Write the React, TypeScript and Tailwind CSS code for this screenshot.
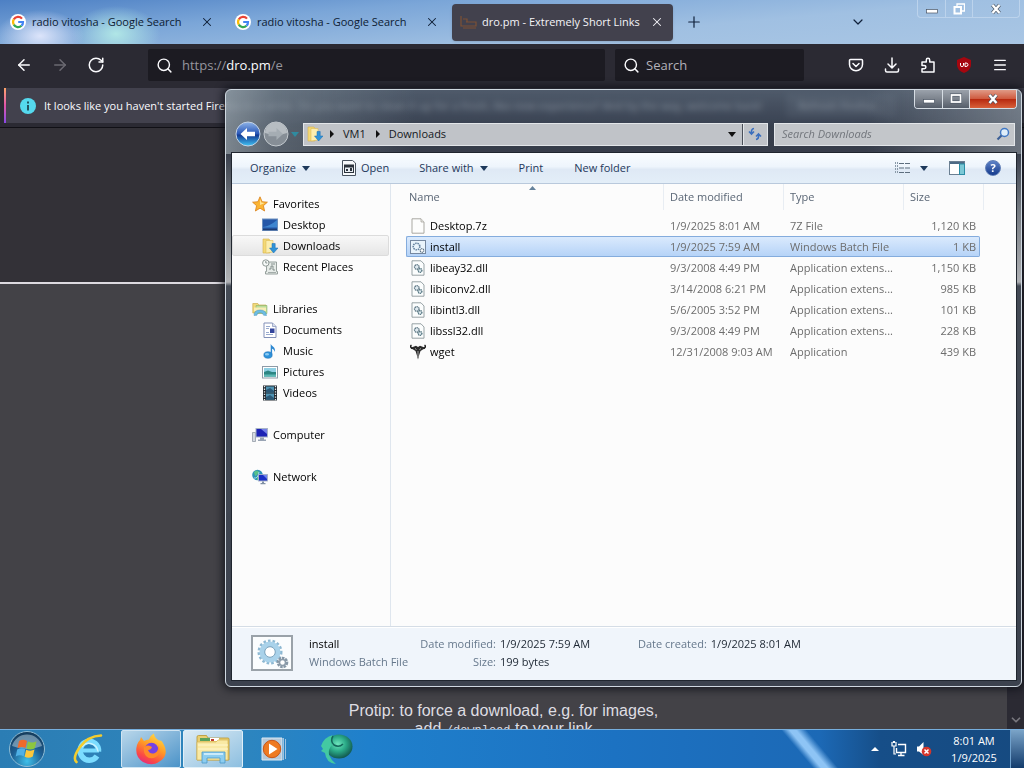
import type { ReactNode } from "react";
import { ArrowLeft, ArrowRight, ChevronDown, Menu, Plus, RotateCw, Search, X } from "lucide-react";

type IconProps = { className?: string };

function GoogleIcon() {
  return (
    <svg viewBox="0 0 16 16" className="size-4 shrink-0">
      <circle cx="8" cy="8" r="8" fill="#fff" />
      <g fill="none" strokeWidth="2.2">
        <path d="M12 4.6A5 5 0 0 0 3.8 5.4" stroke="#ea4335" />
        <path d="M3.8 5.4a5 5 0 0 0 0 5.2" stroke="#fbbc05" />
        <path d="M3.8 10.6a5 5 0 0 0 7.7 1.2" stroke="#34a853" />
        <path d="M11.5 11.8A5 5 0 0 0 13 8H8.2" stroke="#4285f4" />
      </g>
    </svg>
  );
}

function PocketIcon() {
  return (
    <svg viewBox="0 0 16 16" className="size-4" fill="none" stroke="currentColor" strokeWidth="1.5" strokeLinecap="round" strokeLinejoin="round">
      <path d="M2.5 2.5h11a1 1 0 0 1 1 1v4a6.500 6.200 0 0 1-13 0v-4a1 1 0 0 1 1-1z" />
      <path d="M5 6.500l3 3 3-3" />
    </svg>
  );
}

function DownloadIcon() {
  return (
    <svg viewBox="0 0 16 16" className="size-4" fill="none" stroke="currentColor" strokeWidth="1.5" strokeLinecap="round" strokeLinejoin="round">
      <path d="M8 1v9.500M4 7l4 4 4-4M1.500 12v1.500a1.500 1.500 0 0 0 1.500 1.500h10a1.500 1.500 0 0 0 1.500-1.500V12" />
    </svg>
  );
}

function ExtensionIcon() {
  return (
    <svg viewBox="0 0 16 16" className="size-4" fill="none" stroke="currentColor" strokeWidth="1.5" strokeLinejoin="round">
      <path d="M2 15V11.800h2.200a1.700 1.700 0 0 0 0-3.400H2V5h4.300V3a1.700 1.700 0 0 1 3.400 0v2H14v10z" />
    </svg>
  );
}

function DownloadsFolderIcon({ className = "size-4" }: IconProps) {
  return (
    <svg viewBox="0 0 16 16" className={className}>
      <path d="M1 1h6l1 1.500V15H1z" fill="#f3d978" stroke="#d9b448" strokeWidth=".6" />
      <path d="M4 2.500h7V14l-7 1z" fill="#fbeeb0" stroke="#d9b448" strokeWidth=".5" />
      <path d="M10 5.500h3.200V10H16l-4.400 5L7.500 10H10z" fill="#2f93d8" stroke="#1b6db0" strokeWidth=".5" />
    </svg>
  );
}

function StarIcon() {
  return (
    <svg viewBox="0 0 16 16" className="size-4">
      <path d="M8 .8l2.100 4.900 5.300.5-4 3.500 1.200 5.300L8 12.200 3.400 15l1.200-5.300-4-3.500 5.300-.5z" fill="#fbb534" stroke="#d97f16" strokeWidth=".8" />
      <path d="M8 3l1.300 3.500 3.500.4L8 9z" fill="#ffe49a" />
    </svg>
  );
}

function DesktopIcon() {
  return (
    <svg viewBox="0 0 16 16" className="size-4">
      <rect x=".5" y="2" width="15" height="11.500" fill="#2457a8" stroke="#6c8fbe" />
      <path d="M1 10Q8 9 15 3v7.500H1z" fill="#3f86d0" />
      <path d="M1 12.500h14" stroke="#1c3c73" strokeWidth="1.500" />
    </svg>
  );
}

function RecentIcon() {
  return (
    <svg viewBox="0 0 16 16" className="size-4">
      <path d="M4.500 3h10v9.500h1v2.500h-12v-2.500h1z" fill="#e6ebe8" stroke="#8d9794" strokeWidth=".9" />
      <circle cx="3.800" cy="4" r="3.200" fill="#f7faf9" stroke="#8d9794" />
      <path d="M3.800 2v2h1.500M7 10h2V7h2v4h2M9 5h4" fill="none" stroke="#7b8784" strokeWidth=".9" />
      <path d="M6 13.500h8" stroke="#a3acaa" />
    </svg>
  );
}

function LibrariesIcon() {
  return (
    <svg viewBox="0 0 16 16" className="size-4">
      <path d="M.8 2.500h5l1 1.500H14v8H.8z" fill="#f0d97b" stroke="#c8a53d" strokeWidth=".6" />
      <path d="M4 4.500h11v8H4z" fill="#b9dd9b" stroke="#80a860" strokeWidth=".5" />
      <path d="M2 6.500h12V10H2z" fill="#f9edb5" />
      <path d="M2 14.500Q2 9 8 9t6.500 5.500l-3-.3Q11 11.500 8 11.500T5 14.200z" fill="#6cbde3" stroke="#4a93bd" strokeWidth=".5" />
    </svg>
  );
}

function DocumentsIcon() {
  return (
    <svg viewBox="0 0 16 16" className="size-4">
      <path d="M2 1h8.500L14 4.500V15.500H2z" fill="#fff" stroke="#8290b8" />
      <path d="M10.500 1v3.500H14" fill="#d5dcec" stroke="#8290b8" strokeWidth=".7" />
      <path d="M4 4.500h4M4 6.500h3M4 10.500h3M4 12.500h7" stroke="#8ca0c8" strokeWidth=".9" />
      <path d="M8 6.500h4.500v4.500H8z" fill="#32459c" />
    </svg>
  );
}

function MusicIcon() {
  return (
    <svg viewBox="0 0 16 16" className="size-4">
      <ellipse cx="6" cy="12" rx="4.200" ry="3.300" fill="#2f93da" stroke="#1667ad" strokeWidth=".5" />
      <ellipse cx="5" cy="11.300" rx="2" ry="1.200" fill="#8ccbf3" />
      <path d="M8.700 12V.8C9.500 3.500 14 4 12.800 9 12.500 7 11 6 10.100 5.700V12z" fill="#2b87d1" />
    </svg>
  );
}

function PicturesIcon() {
  return (
    <svg viewBox="0 0 16 16" className="size-4">
      <rect x=".5" y="2.500" width="15" height="11.500" fill="#fff" stroke="#8d9aa7" />
      <rect x="2" y="4" width="12" height="8.500" fill="#8fd0e4" />
      <path d="M2 8l4-1.500 4 1.500 4 0v4.500H2z" fill="#2c8583" />
      <path d="M2 10.500h12v2H2z" fill="#5bb8b4" />
    </svg>
  );
}

function VideosIcon() {
  return (
    <svg viewBox="0 0 16 16" className="size-4">
      <rect x="1" y=".5" width="14" height="15" fill="#23292f" />
      <path d="M4 1.500h8v6H4zM4 8.500h8v6H4z" fill="#4f93b3" />
      <path d="M4 5l4-2 4 3v1.500H4zM4 12l4-2 4 3v1.500H4z" fill="#2a5876" />
      <path d="M2.500 1v15M13.500 1v15" stroke="#e4eaee" strokeWidth="1.300" strokeDasharray="1.300 1.300" />
    </svg>
  );
}

function ComputerIcon() {
  return (
    <svg viewBox="0 0 16 16" className="size-4">
      <path d="M.5 5.500h3v9h-3z" fill="#d6dbe2" stroke="#888f9b" strokeWidth=".7" />
      <rect x="4" y="1.500" width="11.500" height="8.500" fill="#1d23b4" stroke="#a8b4c8" />
      <path d="M9 2h6v5z" fill="#7580e8" />
      <path d="M8 10.500h4v2h2v1.500H6v-1.500h2z" fill="#99a4b4" />
    </svg>
  );
}

function NetworkIcon() {
  return (
    <svg viewBox="0 0 16 16" className="size-4">
      <circle cx="5.500" cy="6" r="5.300" fill="#2e93b8" />
      <path d="M2 3q3-3 5 0L5 6 3 7zM5 8l3 0-1 3-2 0z" fill="#58c18a" />
      <path d="M2 9q4 1 5-6" stroke="#bfe9f3" strokeWidth=".8" fill="none" />
      <rect x="6.500" y="5.500" width="9" height="6.500" fill="#1a2fc4" stroke="#a8b4c8" strokeWidth=".9" />
      <path d="M11 6h4v4z" fill="#6f84ef" />
      <path d="M10 12.500h2v1.500h1.500v1.200h-5V14H10z" fill="#8090a4" />
    </svg>
  );
}

function BlankFileIcon() {
  return (
    <svg viewBox="0 0 16 16" className="size-4">
      <path d="M2 .8h9L14 4v11.200H2z" fill="#fdfdfc" stroke="#a09f98" strokeWidth=".9" />
      <path d="M11 .8V4h3" fill="#e9e8e2" stroke="#a09f98" strokeWidth=".7" />
    </svg>
  );
}

function DllIcon() {
  return (
    <svg viewBox="0 0 16 16" className="size-4">
      <path d="M2 .8h9L14 4v11.200H2z" fill="#fbfdfd" stroke="#8c989c" strokeWidth=".9" />
      <circle cx="6.800" cy="7" r="2.300" fill="#dfeaf0" stroke="#58727f" strokeWidth="1.300" strokeDasharray="1.400 .5" />
      <circle cx="10" cy="10.500" r="1.900" fill="#dfeaf0" stroke="#3f6470" strokeWidth="1.200" strokeDasharray="1.200 .5" />
    </svg>
  );
}

function BatchIcon() {
  return (
    <svg viewBox="0 0 16 16" className="size-4">
      <rect x=".5" y="1.500" width="15" height="13" fill="#eaf4fb" stroke="#7688a0" />
      <circle cx="6.500" cy="7.500" r="3.300" fill="none" stroke="#66829f" strokeWidth="1.600" strokeDasharray="1.500 .8" />
      <circle cx="12" cy="11.500" r="1.800" fill="#fff" stroke="#5c7285" strokeWidth="1.200" strokeDasharray="1.200 .5" />
    </svg>
  );
}

function BatchThumbnail() {
  return (
    <svg viewBox="0 0 42 36" className="h-9 w-[42px]">
      <rect x="1" y="1" width="40" height="34" fill="#fbfdfe" stroke="#9aa2a9" strokeWidth="2" />
      <circle cx="19" cy="17" r="11" fill="none" stroke="#8db8d2" strokeWidth="3" strokeDasharray="2.500 2" />
      <circle cx="19" cy="17" r="8" fill="none" stroke="#a9d2ea" strokeWidth="5" />
      <circle cx="19" cy="17" r="5.300" fill="#fff" stroke="#6f9dbb" />
      <circle cx="31.500" cy="27.500" r="4.300" fill="#fff" stroke="#8697a6" strokeWidth="3" strokeDasharray="2.400 .8" />
      <circle cx="31.500" cy="27.500" r="3" fill="#fff" stroke="#8b9ba9" strokeWidth="1.500" />
    </svg>
  );
}

function WgetIcon() {
  return (
    <svg viewBox="0 0 16 16" className="size-4">
      <path d="M3.500 4.500C.5 4.500 0 2 1.500 1M12.500 4.500c3 0 3.500-2.500 2-3.500" fill="none" stroke="#1c1c1c" strokeWidth="1.500" />
      <path d="M1.500 3.500L6 1.800 8 3l2-1.200 4.500 1.700-2 2.200-2 1.300-1.300 4L8 15.500 6.800 11 5.500 7 3.500 5.700z" fill="#2b2b2b" />
      <path d="M5 4.500l1.500 1M11 4.500l-1.500 1M8 7v6" stroke="#c9c9c9" strokeWidth=".8" />
    </svg>
  );
}

function StartOrb() {
  return (
    <svg viewBox="0 0 38 38" className="size-[38px]">
      <defs>
        <radialGradient id="orb" cx=".5" cy=".85" r=".9">
          <stop offset="0" stopColor="#3fc0ea" />
          <stop offset=".5" stopColor="#1d5e93" />
          <stop offset="1" stopColor="#14344f" />
        </radialGradient>
      </defs>
      <circle cx="19" cy="19" r="17.500" fill="url(#orb)" stroke="#8fbdd6" />
      <path d="M4 16a15.500 15.500 0 0 1 30 0q-15 6-30 0z" fill="#d0e4ee" opacity=".45" />
      <path d="M11 11q4-2.500 8 0l-1.500 7q-4-2-8 .2z" fill="#ef6a2b" />
      <path d="M20 11.500q4.500 2 8.500-.3l-1.700 7q-4 2.300-8.300.3z" fill="#8dc63f" />
      <path d="M9.200 19.500q4-2.200 8-.2l-1.500 7q-4-2-8 .2z" fill="#4fb0e6" />
      <path d="M18.200 19.800q4.300 2 8.300-.2l-1.700 7q-4 2.300-8.200.2z" fill="#fcc73c" />
    </svg>
  );
}

function InternetExplorerIcon() {
  return (
    <svg viewBox="0 0 32 32" className="size-8">
      <path d="M8 17.500h18" stroke="#7bdcff" strokeWidth="4" />
      <path d="M25.500 18.500A9.200 9.500 0 1 0 24 23" fill="none" stroke="#7bdcff" strokeWidth="5.500" />
      <path d="M25 18.500A9 9.500 0 0 0 9 14" fill="none" stroke="#c9f3ff" strokeWidth="1.500" />
      <path d="M3.500 29Q-1 25 7 14T28 2.500" fill="none" stroke="#f4cd2e" strokeWidth="2.600" strokeLinecap="round" />
    </svg>
  );
}

function FirefoxIcon() {
  return (
    <svg viewBox="0 0 32 32" className="size-8">
      <defs>
        <linearGradient id="fox" x1=".8" y1="0" x2=".3" y2="1">
          <stop offset="0" stopColor="#ffe14a" />
          <stop offset=".45" stopColor="#ff9a26" />
          <stop offset=".8" stopColor="#fb4a45" />
          <stop offset="1" stopColor="#e52b7c" />
        </linearGradient>
      </defs>
      <path d="M5 7l1-3 3 4q2-1.500 5-1.500 1-4 5-6 0 4 5 7 2-.5 3 1 8 12-1 19-8 6.500-18 1.500-9-6-6-17 .8-3 3-5z" fill="url(#fox)" />
      <circle cx="16.500" cy="16.500" r="6.800" fill="#7542e5" />
      <path d="M9 14q4-3 8 0-1 3-4 3 2 5 7 3 4-2 3-8 4 8-2 12-6 3-10-1-3-4-2-9z" fill="#ff8a2a" />
    </svg>
  );
}

function ExplorerIcon() {
  return (
    <svg viewBox="0 0 34 32" className="h-8 w-[34px]">
      <path d="M1 4q0-1.500 1.500-1.500h8L12 5h20q1 0 1 1v21H1z" fill="#e9cf72" stroke="#b89530" strokeWidth=".8" />
      <path d="M4 5h10v3H4z" fill="#5aa25c" />
      <path d="M14 5h9v3h-9z" fill="#fff" />
      <path d="M15 6h3v2h-3z" fill="#c03c2c" />
      <path d="M1 9h19l2-2h10v20H1z" fill="#f9e9a4" stroke="#d5b654" strokeWidth=".7" />
      <path d="M2 12h30M2 16h30" stroke="#fff7cf" />
      <path d="M6 30V19h23v11h-5v-5H11v5z" fill="#8ccdf0" stroke="#4a97c8" strokeWidth=".8" />
      <path d="M8 21h19" stroke="#dff4ff" strokeWidth="1.500" />
    </svg>
  );
}

function MediaPlayerIcon() {
  return (
    <svg viewBox="0 0 26 24" className="h-6 w-[26px]">
      <path d="M1 1h20v22H1z" fill="#b6c9da" stroke="#dce9f3" />
      <path d="M22.500 1v22M24.500 2v20" stroke="#9fc3e0" />
      <circle cx="11" cy="12" r="8.700" fill="#ee7a22" stroke="#c9571a" />
      <path d="M8 6.500l8.500 5.500L8 17.500z" fill="#fff" />
    </svg>
  );
}

function GreenBirdIcon() {
  return (
    <svg viewBox="0 0 32 32" className="size-8">
      <defs>
        <radialGradient id="bird" cx=".45" cy=".4" r=".6">
          <stop offset="0" stopColor="#6fe6bd" />
          <stop offset=".5" stopColor="#2bab88" />
          <stop offset="1" stopColor="#12594f" />
        </radialGradient>
      </defs>
      <ellipse cx="18" cy="13.500" rx="13.500" ry="12" fill="url(#bird)" />
      <path d="M0 13Q3 4 12 2q-4 5-1 10-4 4-3 10 2 5 7 9Q5 30 4 20l-4-2 2-2z" fill="#43c9a2" />
      <path d="M12 3q-3 5 1 9 5 3 9-1" fill="none" stroke="#14665a" strokeWidth="1.500" />
    </svg>
  );
}

type FileEntry = { name: string; modified: string; type: string; size: string; icon: ReactNode; selected?: boolean };

const files: FileEntry[] = [
  { name: "Desktop.7z", modified: "1/9/2025 8:01 AM", type: "7Z File", size: "1,120 KB", icon: <BlankFileIcon /> },
  { name: "install", modified: "1/9/2025 7:59 AM", type: "Windows Batch File", size: "1 KB", icon: <BatchIcon />, selected: true },
  { name: "libeay32.dll", modified: "9/3/2008 4:49 PM", type: "Application extens...", size: "1,150 KB", icon: <DllIcon /> },
  { name: "libiconv2.dll", modified: "3/14/2008 6:21 PM", type: "Application extens...", size: "985 KB", icon: <DllIcon /> },
  { name: "libintl3.dll", modified: "5/6/2005 3:52 PM", type: "Application extens...", size: "101 KB", icon: <DllIcon /> },
  { name: "libssl32.dll", modified: "9/3/2008 4:49 PM", type: "Application extens...", size: "228 KB", icon: <DllIcon /> },
  { name: "wget", modified: "12/31/2008 9:03 AM", type: "Application", size: "439 KB", icon: <WgetIcon /> },
];

const places = [
  {
    name: "Favorites",
    icon: <StarIcon />,
    items: [
      { name: "Desktop", icon: <DesktopIcon /> },
      { name: "Downloads", icon: <DownloadsFolderIcon />, current: true },
      { name: "Recent Places", icon: <RecentIcon /> },
    ],
  },
  {
    name: "Libraries",
    icon: <LibrariesIcon />,
    items: [
      { name: "Documents", icon: <DocumentsIcon /> },
      { name: "Music", icon: <MusicIcon /> },
      { name: "Pictures", icon: <PicturesIcon /> },
      { name: "Videos", icon: <VideosIcon /> },
    ],
  },
  { name: "Computer", icon: <ComputerIcon />, items: [] },
  { name: "Network", icon: <NetworkIcon />, items: [] },
];

function MinimizeGlyph() {
  return (
    <svg viewBox="0 0 12 12" className="size-3">
      <rect x=".5" y="6.500" width="11" height="3.500" fill="#fff" stroke="#4a5563" strokeWidth=".7" />
    </svg>
  );
}

function CloseGlyph() {
  return (
    <svg viewBox="0 0 12 12" className="size-3">
      <path d="M2.500 2l7 8M9.500 2l-7 8" stroke="#4a5563" strokeWidth="3.600" />
      <path d="M2.500 2l7 8M9.500 2l-7 8" stroke="#fff" strokeWidth="2.400" />
    </svg>
  );
}

function BrowserTab({ title }: { title: string }) {
  return (
    <div className="flex w-[225px] items-center pl-[10px] text-[#0d1c33]">
      <GoogleIcon />
      <button className="ml-[6px] w-[168px] text-left whitespace-nowrap">{title}</button>
      <button aria-label="Close tab">
        <X className="size-[14px]" strokeWidth={1.800} />
      </button>
    </div>
  );
}

function Browser() {
  return (
    <div className="flex min-h-0 flex-1 flex-col">
      <div className="flex h-11 shrink-0 items-center bg-[radial-gradient(ellipse_44px_26px_at_40px_36px,#dce4fa,transparent),radial-gradient(ellipse_44px_28px_at_116px_34px,#b0e6e6,transparent),linear-gradient(175deg,#4d80c4_0%,#7ba6d8_30%,#a0c0e2_65%,#a9c6e4_100%)]">
        <BrowserTab title="radio vitosha - Google Search" />
        <BrowserTab title="radio vitosha - Google Search" />
        <div className="ml-[2px] flex h-[37px] w-[221px] items-center rounded bg-[#42414d] pl-2 text-[#f4f4f8] shadow">
          <svg viewBox="0 0 18 16" className="h-4 w-[18px]">
            <path d="M1 2v10h15V8H6M3 5h4v3h8M3 14h13" fill="none" stroke="#7d5135" strokeWidth="1.200" />
          </svg>
          <button className="ml-1 w-[168px] text-left whitespace-nowrap">dro.pm - Extremely Short Links</button>
          <button aria-label="Close tab">
            <X className="size-[14px]" strokeWidth={1.800} />
          </button>
        </div>
        <button aria-label="New tab" className="ml-3 text-[#10203a]">
          <Plus className="size-[18px]" strokeWidth={1.600} />
        </button>
        <button aria-label="List all tabs" className="mr-[51px] ml-auto text-[#10203a]">
          <ChevronDown className="size-4" strokeWidth={1.800} />
        </button>
        <div className="mr-1 flex h-[18px] self-start rounded-b border border-t-0 border-[#bcd3ec] [&>button]:flex [&>button]:items-center [&>button]:justify-center">
          <button aria-label="Minimize browser" className="w-[28px] border-r border-[#bcd3ec]">
            <MinimizeGlyph />
          </button>
          <button aria-label="Restore browser" className="w-[27px] border-r border-[#bcd3ec]">
            <svg viewBox="0 0 12 12" className="size-3" fill="none" stroke="#fff">
              <path d="M4 3V1h7.500v7H9" strokeWidth="1.300" />
              <rect x="1.500" y="4" width="6.500" height="6.500" strokeWidth="2" />
            </svg>
          </button>
          <button aria-label="Close browser" className="w-[46px]">
            <CloseGlyph />
          </button>
        </div>
      </div>

      <div className="flex h-11 shrink-0 items-center bg-[#2b2a33] pb-[2px] text-[#fbfbfe]">
        <button aria-label="Back" className="ml-[15px]">
          <ArrowLeft className="size-[18px]" strokeWidth={2} />
        </button>
        <button aria-label="Forward" className="ml-[18px] text-[#6b6a72]">
          <ArrowRight className="size-[18px]" strokeWidth={2} />
        </button>
        <button aria-label="Reload" className="ml-[18px]">
          <RotateCw className="size-[18px]" strokeWidth={2} />
        </button>
        <div className="ml-[43px] flex h-8 flex-1 items-center rounded-xs bg-[#1c1b22] pl-2 text-[13px]">
          <Search className="size-[17px]" strokeWidth={2} />
          <a href="#" className="ml-[9px] text-[#96959e]">
            https://<span className="text-[#fbfbfe]">dro.pm</span>/e
          </a>
        </div>
        <label className="mr-11 ml-[10px] flex h-8 w-[189px] items-center rounded-xs bg-[#1c1b22] pl-2">
          <Search className="size-[17px] shrink-0" strokeWidth={2} />
          <input aria-label="Search the web" placeholder="Search" className="ml-[6px] w-full bg-transparent text-[13px] outline-none placeholder:text-[#b3b2ba]" />
        </label>
        <div className="mr-4 flex items-center gap-5">
          <button aria-label="Save to Pocket"><PocketIcon /></button>
          <button aria-label="Downloads"><DownloadIcon /></button>
          <button aria-label="Extensions"><ExtensionIcon /></button>
          <button aria-label="uBlock Origin">
            <svg viewBox="0 0 16 16" className="size-4">
              <path d="M8 0l7 3v5q0 5-7 8-7-3-7-8V3z" fill="#a5060f" />
              <path d="M4.500 6v2.500q0 1 1.500 1t1.500-1V6M9 9.500V6h1q2 0 2 1.700T10 9.500z" fill="none" stroke="#fff" />
            </svg>
          </button>
          <button aria-label="Application menu"><Menu className="size-4" strokeWidth={2} /></button>
        </div>
      </div>

      <div className="flex h-10 shrink-0 border-b border-[#111016] bg-[#2b2a33] pb-1 pl-1">
        <div className="w-[2px] bg-linear-to-b from-[#ffa365] via-[#e052a8] to-[#8a45e8]" />
        <div className="flex min-w-0 flex-1 items-center overflow-hidden bg-[#42414d] pl-[14px] text-[#fbfbfe]">
          <svg viewBox="0 0 16 16" className="size-4 shrink-0">
            <circle cx="8" cy="8" r="8" fill="#55d9ee" />
            <path d="M8 3.500v2M8 7v5.500" stroke="#1c4452" strokeWidth="1.800" />
          </svg>
          <p className="ml-2 whitespace-nowrap">
            It looks like you haven't started Firefox in a while. Do you want to clean it up for a fresh, like-new experience? And by the way, welcome back!
          </p>
          <button className="ml-6 rounded bg-[#5b5b66] px-3 py-1 whitespace-nowrap">Refresh Firefox…</button>
        </div>
      </div>

      <div className="flex min-h-0 flex-1">
        <div className="flex min-h-0 min-w-0 flex-1 flex-col overflow-hidden bg-[#434247]">
          <div className="h-[156px] shrink-0 border-b-2 border-[#dddae0] bg-[#333137]" />
          <p className="pt-[418px] text-center font-['Liberation_Sans',sans-serif] text-[16px] leading-[18px] text-[#dedde2]">
            Protip: to force a download, e.g. for images,
            <br />
            add <code className="font-['Liberation_Mono',monospace] text-[12px]">/download</code> to your link
          </p>
        </div>
        <div className="flex w-[17px] items-end justify-center bg-[#2b2a33] pb-[2px] text-[#77767d]">
          <ChevronDown className="size-[14px]" strokeWidth={3} />
        </div>
      </div>
    </div>
  );
}

function PlacesPane() {
  return (
    <nav aria-label="Places" className="flex w-[159px] shrink-0 flex-col gap-[21px] border-r border-[#dfe6ee] pt-[9px]">
      {places.map((group) => (
        <div key={group.name}>
          <button className="flex h-[21px] items-center gap-[5px] pl-5">
            {group.icon}
            {group.name}
          </button>
          {group.items.map((item) => (
            <button
              key={item.name}
              className={
                "current" in item
                  ? "flex h-[21px] w-[157px] items-center gap-[5px] rounded-xs border border-[#dcdcdc] bg-linear-to-b from-[#f8f8f8] to-[#e6e6e6] pl-[29px]"
                  : "flex h-[21px] w-[157px] items-center gap-[5px] pl-[30px]"
              }
            >
              {item.icon}
              {item.name}
            </button>
          ))}
        </div>
      ))}
    </nav>
  );
}

function FileTable() {
  const cell = "h-[21px] border-y border-transparent p-0 first:border-l last:border-r";
  const selectedCell =
    "h-[21px] border-y border-[#84acdd] p-0 first:rounded-l-xs first:border-l last:rounded-r-xs last:border-r";
  return (
    <table className="w-[574px] table-fixed border-separate border-spacing-0 text-left text-[#6d6d6d]">
      <thead className="text-[#5a6675]">
        <tr>
          <th scope="col" className="relative h-[31px] w-[258px] p-0 align-top font-normal">
            <svg viewBox="0 0 7 4" className="absolute top-[2px] left-[123px] h-1 w-[7px]">
              <path d="M0 4l3.500-4L7 4z" fill="#66829b" />
            </svg>
            <div className="flex h-[26px] items-center border-r border-[#e8edf3] pl-[3px]">Name</div>
          </th>
          <th scope="col" className="h-[31px] w-[120px] p-0 align-top font-normal">
            <div className="flex h-[26px] items-center border-r border-[#e8edf3] pl-[6px]">Date modified</div>
          </th>
          <th scope="col" className="h-[31px] w-[120px] p-0 align-top font-normal">
            <div className="flex h-[26px] items-center border-r border-[#e8edf3] pl-[6px]">Type</div>
          </th>
          <th scope="col" className="h-[31px] p-0 align-top font-normal">
            <div className="-mr-1 flex h-[26px] items-center border-r border-[#e8edf3] pl-[6px]">Size</div>
          </th>
        </tr>
      </thead>
      <tbody>
        {files.map((file) => {
          const style = file.selected ? selectedCell : cell;
          return (
            <tr key={file.name} className={file.selected ? "bg-linear-to-b from-[#dcebfd] to-[#b4d2f7]" : ""}>
              <td className={style}>
                <div className="flex items-center gap-1 pl-[3px] text-black">
                  {file.icon}
                  {file.name}
                </div>
              </td>
              <td className={style}>
                <div className="pl-[6px]">{file.modified}</div>
              </td>
              <td className={style}>
                <div className="pl-[6px] whitespace-nowrap">{file.type}</div>
              </td>
              <td className={style}>
                <div className="pr-[3px] text-right">{file.size}</div>
              </td>
            </tr>
          );
        })}
      </tbody>
    </table>
  );
}

function Caret() {
  return (
    <svg viewBox="0 0 8 5" className="h-[5px] w-2">
      <path d="M0 0h8L4 5z" fill="currentColor" />
    </svg>
  );
}

function PathArrow() {
  return (
    <svg viewBox="0 0 4 8" className="h-2 w-1">
      <path d="M0 0l4 4-4 4z" fill="#111" />
    </svg>
  );
}

function ExplorerWindow() {
  return (
    <section
      aria-label="Downloads"
      className="absolute top-[89px] right-[2px] bottom-[81px] left-[225px] flex flex-col rounded-md border border-[#cfd8e0] [background:linear-gradient(90deg,#aab6bc99_0px,#8c9aa266_50px,transparent_190px,transparent_640px,#9aa3ab88_100%)_0_0/100%_64px_no-repeat,linear-gradient(180deg,#56687aaa_0px,#3d4c5eaa_26px,#373e4ce6_60px,#7c8288f0_120px,#b7b9bcf0_192px,#454c57f0_196px,#3c424e_100%)] px-[5px] pb-[5px] shadow-[0_0_9px_2px_rgba(10,12,20,0.8)] backdrop-blur-[3px]"
    >
      <div className="flex h-7 justify-end">
        <div className="-mr-px flex h-[19px] overflow-hidden rounded-b border border-t-0 border-[#d6dde4] [&>button]:flex [&>button]:items-center [&>button]:justify-center">
          <button aria-label="Minimize" className="w-[28px] border-r border-[#d6dde4] bg-linear-to-b from-[#9ba2ab] via-[#7c838d] via-50% to-[#565e6a]">
            <MinimizeGlyph />
          </button>
          <button aria-label="Maximize" className="w-[27px] border-r border-[#d6dde4] bg-linear-to-b from-[#9ba2ab] via-[#7c838d] via-50% to-[#565e6a]">
            <svg viewBox="0 0 12 12" className="size-3" fill="none">
              <rect x="1.500" y="2" width="9" height="7" stroke="#4a5563" strokeWidth="3" />
              <rect x="1.500" y="2" width="9" height="7" stroke="#fff" strokeWidth="1.800" />
            </svg>
          </button>
          <button aria-label="Close" className="w-[46px] bg-[linear-gradient(180deg,#e09a86_0%,#cf5b40_48%,#b82a10_52%,#d8603a_100%)]">
            <CloseGlyph />
          </button>
        </div>
      </div>

      <div className="flex h-[34px] items-center pb-[2px]">
        <button aria-label="Back to previous folder" className="ml-1">
          <svg viewBox="0 0 26 26" className="size-[26px]">
            <defs>
              <linearGradient id="back" x1="0" y1="0" x2="0" y2="1">
                <stop offset="0" stopColor="#8fb4e8" />
                <stop offset=".48" stopColor="#2a58b8" />
                <stop offset=".55" stopColor="#123a94" />
                <stop offset="1" stopColor="#42c4f4" />
              </linearGradient>
            </defs>
            <circle cx="13" cy="13" r="12" fill="url(#back)" stroke="#c4d2e4" />
            <path d="M5.500 13l6.500-6v3.800h8v4.400h-8V19z" fill="#fff" />
          </svg>
        </button>
        <button aria-label="Forward to next folder" className="ml-[2px]">
          <svg viewBox="0 0 26 26" className="size-[26px]">
            <circle cx="13" cy="13" r="12" fill="#868e96" stroke="#c3c9ce" />
            <path d="M2 12a11 11 0 0 1 22 0q-11 4-22 0z" fill="#b7bdc2" />
            <path d="M20 13l-6.500-6v3.800h-8v4.400h8V19z" fill="#a5adb3" />
          </svg>
        </button>
        <button aria-label="Recent locations" className="ml-[2px] text-[#2f8ba0]">
          <Caret />
        </button>
        <div className="ml-1 flex h-[23px] min-w-0 flex-1 border border-[#e3e6e9] bg-[#c0c3c8]">
          <div className="flex flex-1 items-center pl-[3px] text-[#15181d]">
            <DownloadsFolderIcon />
            <span className="ml-[7px]"><PathArrow /></span>
            <button className="ml-[9px]">VM1</button>
            <span className="ml-[10px]"><PathArrow /></span>
            <button className="ml-[9px]">Downloads</button>
            <button aria-label="Previous locations" className="mr-[6px] ml-auto text-[#111]"><Caret /></button>
          </div>
          <button aria-label="Refresh" className="flex w-[25px] items-center justify-center border-l border-[#4a4f58] shadow-[inset_1px_0_#e3e6e9]">
            <svg viewBox="0 0 14 14" className="size-[14px]" fill="none" stroke="#3b6fbe" strokeWidth="1.600">
              <path d="M6 1.500Q3 2 3.500 6M1 4.500L3.500 7 6 4.500" />
              <path d="M8 12.500q3-.5 2.500-4.500M8 9.500L10.500 7 13 9.500" />
            </svg>
          </button>
        </div>
        <label className="mr-px ml-[6px] flex h-[23px] w-[241px] items-center border border-[#e3e6e9] bg-[#c3c6ca] px-[7px]">
          <input
            aria-label="Search Downloads"
            placeholder="Search Downloads"
            className="min-w-0 flex-1 bg-transparent italic outline-none placeholder:text-[#72767c]"
          />
          <svg viewBox="0 0 14 14" className="-mr-[3px] size-[14px]">
            <circle cx="8.500" cy="5.500" r="4" fill="#dfeefa" stroke="#4178c4" strokeWidth="1.500" />
            <path d="M5.500 8.500L1.500 12.500" stroke="#3c5f96" strokeWidth="2.200" />
          </svg>
        </label>
      </div>

      <div className="-mr-px flex min-h-0 flex-1 flex-col border border-[#20262f] bg-[#fcfcfc]">
        <div className="flex h-[31px] shrink-0 items-center border-b border-[#b9c9dc] bg-[linear-gradient(180deg,#fafdff_0%,#eef5fc_45%,#dfe9f5_55%,#e3eef8_100%)] text-[#1e395b]">
          <button className="ml-[18px] flex items-center gap-[6px]">Organize <Caret /></button>
          <button className="ml-8 flex items-center gap-[5px]">
            <svg viewBox="0 0 14 16" className="h-4 w-[14px]">
              <path d="M.5.5h10L13.500 3v12.500H.5z" fill="#f7f9fb" stroke="#48525e" />
              <path d="M2 4.500h10V13H2z" fill="#2b323b" />
              <path d="M3 7.500h8V12H3z" fill="#e8edf2" />
              <path d="M4 9h2v2H4zM8 8h2v3H8z" fill="#2b323b" />
            </svg>
            Open
          </button>
          <button className="ml-[30px] flex items-center gap-[6px]">Share with <Caret /></button>
          <button className="ml-[31px]">Print</button>
          <button className="ml-[31px]">New folder</button>
          <div className="mr-[15px] ml-auto flex items-center">
            <button aria-label="Change your view" className="flex items-center gap-[10px]">
              <svg viewBox="0 0 16 14" className="h-[14px] w-4">
                <path d="M1.500 1v12M3.500 1v12" stroke="#8a9aa8" strokeDasharray="2 1" />
                <path d="M5 2.500h11M5 7h11M5 11.500h11" stroke="#5d6e7e" strokeWidth="1.200" strokeDasharray="5 1" />
              </svg>
              <Caret />
            </button>
            <button aria-label="Show the preview pane" className="ml-[21px]">
              <svg viewBox="0 0 16 14" className="h-[14px] w-4">
                <rect x=".5" y=".5" width="15" height="13" fill="#fff" stroke="#6a7f92" />
                <path d="M1 2h14" stroke="#4d6a85" strokeWidth="2" />
                <rect x="10.500" y="3" width="5" height="10.500" fill="#7cc8d6" stroke="#2b8da5" />
              </svg>
            </button>
            <button aria-label="Get help" className="ml-5 flex size-4 items-center justify-center rounded-full border border-[#5f7db5] bg-linear-to-b from-[#5f83c8] to-[#153a8c] text-[11px] font-bold text-white">
              ?
            </button>
          </div>
        </div>

        <div className="flex min-h-0 flex-1">
          <PlacesPane />
          <div className="min-w-0 flex-1 pl-[15px]">
            <FileTable />
          </div>
        </div>

        <div className="flex h-[54px] shrink-0 items-center border-t border-[#d5dde6] bg-[#f0f5fb] pb-[2px] pl-[19px] shadow-[inset_0_1px_#fff]">
          <BatchThumbnail />
          <dl className="ml-4 grid grid-cols-[105px_78px_134px_auto_auto] gap-x-1 text-[#1d2733] leading-[18px] [&>dt]:text-[#66788c]">
            <dd className="text-black">install</dd>
            <dt className="text-right">Date modified:</dt>
            <dd>1/9/2025 7:59 AM</dd>
            <dt>Date created:</dt>
            <dd>1/9/2025 8:01 AM</dd>
            <dd className="text-[#66788c]">Windows Batch File</dd>
            <dt className="text-right">Size:</dt>
            <dd>199 bytes</dd>
          </dl>
        </div>
      </div>
    </section>
  );
}

function Taskbar() {
  return (
    <footer className="flex h-[39px] shrink-0 items-center border-t border-[#76aede] bg-[linear-gradient(50deg,transparent_77.000%,#8ec4f5_77.800%,#8ec4f5_78.400%,transparent_79.400%),linear-gradient(90deg,#2b7db4_0%,#2f86bd_22%,#1f80cc_36%,#1c72c2_60%,#1c69b6_80%,#164e88_86%,#164a80_100%)] text-white">
      <button aria-label="Start" className="ml-2">
        <StartOrb />
      </button>
      <button aria-label="Internet Explorer" className="ml-[27px]">
        <InternetExplorerIcon />
      </button>
      <button aria-label="Firefox" className="ml-[16px] flex h-[38px] w-[60px] items-center justify-center rounded-xs border border-[#cfe4f2] bg-linear-to-br from-[#b9d7ea] to-[#4a93c8]">
        <FirefoxIcon />
      </button>
      <button aria-label="Windows Explorer" className="ml-[2px] flex h-[38px] w-[60px] items-center justify-center rounded-xs border border-[#e0eff8] bg-linear-to-br from-[#dcebf4] to-[#8dbfe0]">
        <ExplorerIcon />
      </button>
      <button aria-label="Media Player" className="ml-[18px]">
        <MediaPlayerIcon />
      </button>
      <button aria-label="Web browser" className="ml-[34px]">
        <GreenBirdIcon />
      </button>
      <div className="ml-auto flex h-full items-center">
        <button aria-label="Show hidden icons">
          <svg viewBox="0 0 8 4" className="h-1 w-2">
            <path d="M0 4l4-4 4 4z" fill="#fff" />
          </svg>
        </button>
        <button aria-label="Network" className="ml-[12px]">
          <svg viewBox="0 0 16 16" className="size-4" fill="none" stroke="#fff">
            <path d="M1 1v4h4V1M2.500 0v2M3.500 0v2M3 5v8h2" strokeWidth="1.200" />
            <path d="M7 3.500h7.500v8H5.500V7M10 12v2.500M7 14.500h6.500" strokeWidth="1.400" />
          </svg>
        </button>
        <button aria-label="Volume" className="ml-[9px]">
          <svg viewBox="0 0 16 16" className="size-4">
            <path d="M1 5.500h2L7.500 1v13L3 10.500H1z" fill="#fff" />
            <circle cx="10.500" cy="10.500" r="4.800" fill="#d5362b" />
            <path d="M8.500 8.500l4 4M12.500 8.500l-4 4" stroke="#fff" strokeWidth="1.500" />
          </svg>
        </button>
        <button className="ml-[18px] w-[48px] text-center leading-[17px] whitespace-nowrap">
          8:01 AM
          <br />
          1/9/2025
        </button>
        <button aria-label="Show desktop" className="ml-[12px] h-full w-[14px] border-l border-[#6fa0cc] bg-linear-to-b from-[#7ba4c8] to-[#123c6c]" />
      </div>
    </footer>
  );
}

export default function App() {
  return (
    <main className="relative flex h-screen flex-col overflow-hidden bg-[#2b2a33] font-['Open_Sans',sans-serif] text-[11px] leading-4">
      <Browser />
      <ExplorerWindow />
      <Taskbar />
    </main>
  );
}
